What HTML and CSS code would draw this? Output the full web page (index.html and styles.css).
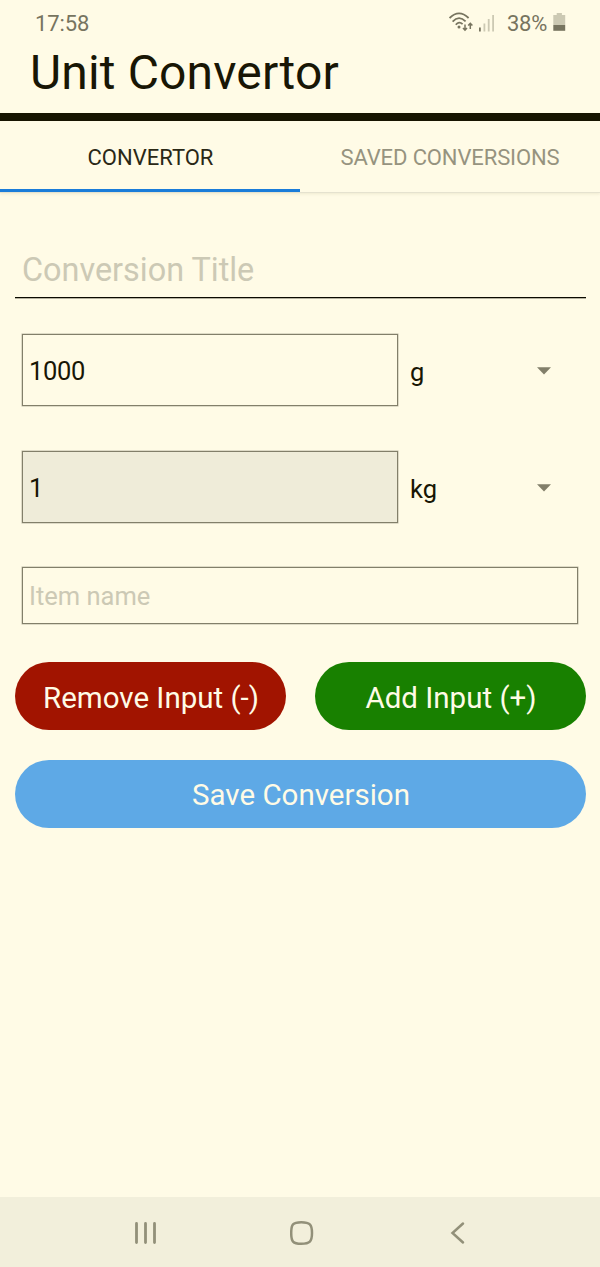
FILE: index.html
```html
<!DOCTYPE html>
<html lang="en">
<head>
<meta charset="utf-8">
<title>Unit Convertor</title>
<link rel="stylesheet" href="styles.css">
</head>
<body>
<div class="screen">
  <header class="header">
    <div class="status">
      <span class="time">17:58</span>
      <div class="indicators">
        <svg class="wifi" width="24" height="20" viewBox="0 0 24 20" fill="none" stroke="#77745f" stroke-width="1.8">
          <path d="M.6 6Q10 -3.200 19.600 6M3.600 9.600Q10 2.800 16.600 9.400M6.800 12.800Q10 8.800 13.600 12.200"/>
          <circle cx="10" cy="15" r="1.500" fill="#77745f" stroke="none"/>
          <path stroke-width="1.500" d="M16 12.500v5.500M14 16l2 2.200 2-2.200M21.300 17v-5.600M19.200 13.600l2.100-2.200 2.100 2.200"/>
        </svg>
        <svg class="signal" width="16" height="18" viewBox="0 0 16 18" fill="#ccc9b3">
          <path fill="#77745f" d="M0 13.500h1.800v4H0z"/>
          <path d="M4.500 9.500h1.800v8H4.500zM8.800 5h1.800v12.500H8.800zM13.200 1H15v16.500h-1.800z"/>
        </svg>
        <span class="percent">38%</span>
        <svg class="battery" width="13" height="19" viewBox="0 0 13 19">
          <path fill="#ccc9b3" d="M3.700 0h5.200v2H12.200v10H.3V2h3.400z"/>
          <path fill="#77745f" d="M.3 12h11.900v5.800H.3z"/>
        </svg>
      </div>
    </div>
    <h1 class="title">Unit Convertor</h1>
  </header>
  <nav class="tabs">
    <a class="tab active"><span>CONVERTOR</span></a>
    <a class="tab"><span class="wide">SAVED CONVERSIONS</span></a>
  </nav>
  <main class="form">
    <div class="title-field">Conversion Title</div>
    <div class="row first">
      <div class="box value">1000</div>
      <div class="unit"><span>g</span><svg width="14" height="8" viewBox="0 0 14 8"><path fill="#827f6a" d="M0 .3h14L7 7.500z"/></svg></div>
    </div>
    <div class="row">
      <div class="box value result">1</div>
      <div class="unit"><span>kg</span><svg width="14" height="8" viewBox="0 0 14 8"><path fill="#827f6a" d="M0 .3h14L7 7.500z"/></svg></div>
    </div>
    <div class="box item">Item name</div>
    <div class="actions">
      <button class="btn remove">Remove Input (-)</button>
      <button class="btn add">Add Input (+)</button>
      <button class="btn save">Save Conversion</button>
    </div>
  </main>
  <footer class="navbar">
    <svg width="24" height="24" viewBox="0 0 24 24" fill="none" stroke="#929079" stroke-width="2.800" stroke-linecap="round"><path d="M2.500 2.500v19M11.500 2.500v19M20.500 2.500v19"/></svg>
    <svg width="24" height="24" viewBox="0 0 24 24" fill="none" stroke="#929079" stroke-width="2.500"><path d="M11.300 1.300C19.800 1.300 22 3.500 22 12S19.800 22.700 11.300 22.700 1.200 20.500 1.200 12 2.800 1.300 11.300 1.300z"/></svg>
    <svg width="24" height="24" viewBox="0 0 24 24" fill="none" stroke="#929079" stroke-width="2.500" stroke-linecap="round"><path d="M17 2.500L6.500 12 17 21.500"/></svg>
  </footer>
</div>
</body>
</html>
```
FILE: styles.css
```css
* { box-sizing: border-box; }
body {
  margin: 0;
  background: #fffbe6;
  color: #181605;
  font-family: Roboto, sans-serif;
}
.screen {
  display: flex;
  flex-direction: column;
  width: 600px;
  height: 1267px;
}
.header {
  height: 121px;
  border-bottom: 8px solid #171400;
}
.status {
  display: flex;
  justify-content: space-between;
  height: 46px;
  padding: 0 34px 0 35px;
  line-height: 47px;
  font-size: 22px;
  color: #77745f;
}
.time { letter-spacing: -0.1px; }
.indicators { display: flex; align-items: flex-start; }
.wifi { margin: 12px 6px 0 0; }
.signal { margin: 14px 12px 0 0; }
.percent { width: 46px; letter-spacing: -0.3px; white-space: nowrap; }
.battery { margin-top: 13px; }
.title {
  margin: 0 0 0 30px;
  font-size: 48px;
  font-weight: 400;
  line-height: 53px;
  letter-spacing: 0.15px;
}
.tabs {
  display: grid;
  grid-template-columns: 300px 300px;
  height: 72px;
  border-bottom: 1px solid #e5e2cf;
  box-shadow: 0 1px 3px rgba(90, 80, 30, .1);
}
.tab {
  height: 71px;
  border-bottom: 3px solid transparent;
  font-size: 22px;
  line-height: 73px;
  text-align: center;
  color: #96937f;
}
.tab.active {
  padding-left: 1px;
  border-color: #1a7cd9;
  color: #2a2816;
}
.wide { letter-spacing: -0.12px; }
.form { flex: 1; padding: 50px 14px 0 15px; }
.title-field {
  height: 55px;
  padding-left: 7px;
  border-bottom: 1px solid #0b0a00;
  box-shadow: 0 1px 0 #b5b29f;
  font-size: 32.4px;
  line-height: 54px;
  color: #ccc9b5;
}
.box {
  border: 1px solid #827f6a;
  box-shadow: 0 0 0 .5px #bdbaa6;
  padding-left: 6px;
  font-size: 25.500px;
}
.row { display: flex; gap: 12px; margin: 45px 8px 0 7px; }
.row.first { margin-top: 36px; }
.value { width: 376px; height: 72px; line-height: 72px; letter-spacing: -0.3px; }
.result { background: #efecd9; }
.unit {
  display: flex;
  flex: 1;
  align-items: center;
  justify-content: space-between;
  padding-right: 27px;
  font-size: 25.500px;
}
.unit span { padding-top: 3px; }
.unit svg { margin-top: 2px; }
.item {
  height: 57px;
  margin: 44px 8px 38px 7px;
  line-height: 56px;
  color: #ccc9b5;
}
.actions {
  display: grid;
  grid-template-columns: 1fr 1fr;
  gap: 29.5px 29px;
}
.btn {
  height: 68px;
  padding: 3px 0 0 1px;
  border: 0;
  border-radius: 34px;
  font: 29.5px Roboto, sans-serif;
  color: #fffbe6;
}
.remove { background: #a11400; }
.add { background: #188000; }
.save { grid-column: 1 / -1; background: #5ea9e6; }
.navbar {
  display: flex;
  justify-content: space-between;
  align-items: center;
  height: 70px;
  padding: 2px 130px 0 134px;
  background: #f2efdb;
}
```
